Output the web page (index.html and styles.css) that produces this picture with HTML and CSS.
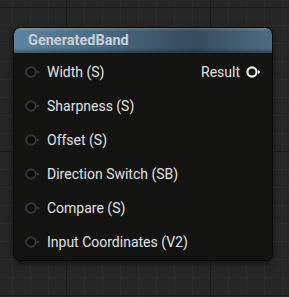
FILE: index.html
```html
<!DOCTYPE html>
<html lang="en">
<head>
    <meta charset="UTF-8">
    <title>GeneratedBand</title>
    <link rel="stylesheet" href="styles.css">
</head>
<body>
    <div class="node">
        <div class="node-header">GeneratedBand</div>
        <div class="node-body">
            <div class="row">
                <div class="pin-in">
                    <svg class="pin" width="15" height="12" viewBox="0 0 15 12"><circle cx="6" cy="6" r="4.8" fill="#0b0b0b" stroke="#373737" stroke-width="2"/><path d="M12 4 L14.5 6 L12 8 Z" fill="#373737"/></svg>
                    <span>Width (S)</span>
                </div>
                <div class="pin-out">
                    <span>Result</span>
                    <svg class="pin" width="15" height="12" viewBox="0 0 15 12"><circle cx="6" cy="6" r="4.6" fill="#1a1a1a" stroke="#ececec" stroke-width="2.2"/><path d="M12 4 L14.5 6 L12 8 Z" fill="#ececec"/></svg>
                </div>
            </div>
            <div class="row">
                <div class="pin-in">
                    <svg class="pin" width="15" height="12" viewBox="0 0 15 12"><circle cx="6" cy="6" r="4.8" fill="#0b0b0b" stroke="#373737" stroke-width="2"/><path d="M12 4 L14.5 6 L12 8 Z" fill="#373737"/></svg>
                    <span>Sharpness (S)</span>
                </div>
            </div>
            <div class="row">
                <div class="pin-in">
                    <svg class="pin" width="15" height="12" viewBox="0 0 15 12"><circle cx="6" cy="6" r="4.8" fill="#0b0b0b" stroke="#373737" stroke-width="2"/><path d="M12 4 L14.5 6 L12 8 Z" fill="#373737"/></svg>
                    <span>Offset (S)</span>
                </div>
            </div>
            <div class="row">
                <div class="pin-in">
                    <svg class="pin" width="15" height="12" viewBox="0 0 15 12"><circle cx="6" cy="6" r="4.8" fill="#0b0b0b" stroke="#373737" stroke-width="2"/><path d="M12 4 L14.5 6 L12 8 Z" fill="#373737"/></svg>
                    <span>Direction Switch (SB)</span>
                </div>
            </div>
            <div class="row">
                <div class="pin-in">
                    <svg class="pin" width="15" height="12" viewBox="0 0 15 12"><circle cx="6" cy="6" r="4.8" fill="#0b0b0b" stroke="#373737" stroke-width="2"/><path d="M12 4 L14.5 6 L12 8 Z" fill="#373737"/></svg>
                    <span>Compare (S)</span>
                </div>
            </div>
            <div class="row">
                <div class="pin-in">
                    <svg class="pin" width="15" height="12" viewBox="0 0 15 12"><circle cx="6" cy="6" r="4.8" fill="#0b0b0b" stroke="#373737" stroke-width="2"/><path d="M12 4 L14.5 6 L12 8 Z" fill="#373737"/></svg>
                    <span>Input Coordinates (V2)</span>
                </div>
            </div>
        </div>
    </div>
</body>
</html>
```

FILE: styles.css
```css
body {
    margin: 0;
    padding: 27px 0 0 13px;
    min-height: 297px;
    box-sizing: border-box;
    font-family: Roboto, 'Liberation Sans', sans-serif;
    background-color: #262626;
    background-image:
        linear-gradient(to right, #1c1c1c 1px, transparent 1px),
        linear-gradient(to bottom, #1c1c1c 1px, transparent 1px),
        linear-gradient(to right, #2b2b2b 1px, transparent 1px),
        linear-gradient(to bottom, #2b2b2b 1px, transparent 1px);
    background-size: 144px 144px, 144px 144px, 18px 18px, 18px 18px;
    background-position: 66px 7px, 66px 7px, 12px 7px, 12px 7px;
}

.node {
    width: 260px;
    height: 234px;
    box-sizing: border-box;
    border: 1px solid #0a0a0a;
    border-radius: 7px;
    background: #131412;
    box-shadow: 0 2px 6px rgba(0, 0, 0, 0.5);
    overflow: hidden;
}

.node-header {
    height: 25px;
    box-sizing: border-box;
    padding: 4px 0 0 14px;
    font-size: 14.5px;
    font-weight: bold;
    color: #c9d0d5;
    background:
        linear-gradient(to bottom, rgba(255, 255, 255, 0.18) 0, rgba(255, 255, 255, 0) 3px, rgba(0, 0, 0, 0) 20px, rgba(0, 0, 0, 0.35) 100%),
        linear-gradient(to right, #5e84a0 0%, #426076 45%, #364b5c 70%, #4d6c83 100%);
    border-radius: 6px 6px 0 0;
}

.node-body {
    padding: 2px 0;
}

.row {
    height: 34px;
    display: flex;
    align-items: center;
    justify-content: space-between;
    padding: 0 11px 0 11px;
    font-size: 14px;
    color: #e2e2e2;
}

.pin-in,
.pin-out {
    display: flex;
    align-items: center;
}

.pin-in .pin {
    margin-right: 7px;
}

.pin-out .pin {
    margin-left: 6px;
}
```
